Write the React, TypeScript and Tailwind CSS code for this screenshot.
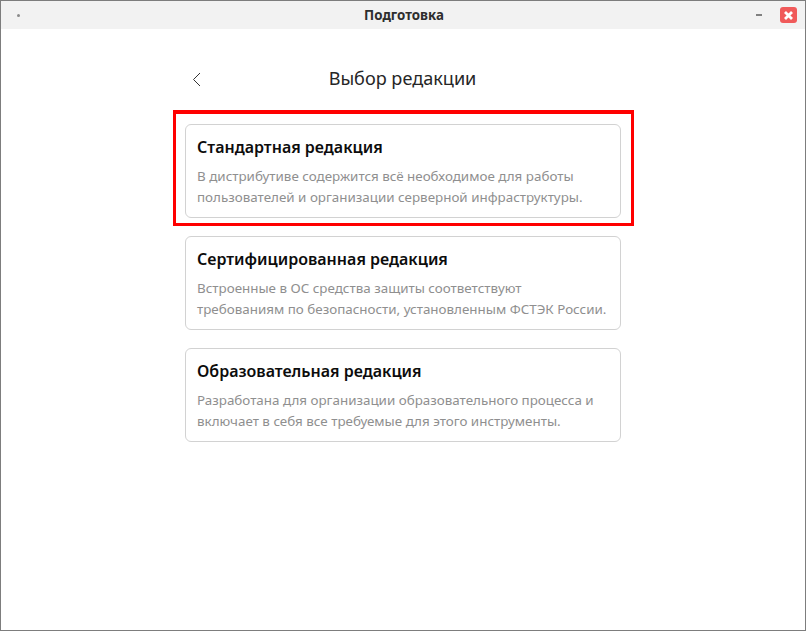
const editions = [
  {
    title: "Стандартная редакция",
    lines: ["В дистрибутиве содержится всё необходимое для работы", "пользователей и организации серверной инфраструктуры."],
  },
  {
    title: "Сертифицированная редакция",
    lines: ["Встроенные в ОС средства защиты соответствуют", "требованиям по безопасности, установленным ФСТЭК России."],
  },
  {
    title: "Образовательная редакция",
    lines: ["Разработана для организации образовательного процесса и", "включает в себя все требуемые для этого инструменты."],
  },
];

function EditionCard({ title, lines, selected }: { title: string; lines: string[]; selected?: boolean }) {
  return (
    <div className="relative h-[94px] w-[436px] rounded-[6px] border border-[#d2d2d2] bg-white pl-[11px] pt-[11px]">
      <div className="text-[16px] leading-[22px] font-semibold text-[#0c0c0c]">{title}</div>
      <div className="mt-[8px] text-[13.4px] leading-[20.5px] whitespace-nowrap text-[#8f8f8f]">
        {lines.map((line) => (
          <div key={line}>{line}</div>
        ))}
      </div>
      {selected && (
        <div className="absolute -top-[15px] -left-[13px] h-[116px] w-[461px] border-[3px] border-t-4 border-[#ff0000]" />
      )}
    </div>
  );
}

export default function App() {
  return (
    <div className="flex h-[631px] w-[806px] flex-col overflow-hidden border border-[#7d7d7d] bg-white font-['Noto_Sans','Open_Sans',sans-serif]">
      <div className="flex h-[28px] items-center bg-[#f2f2f2] pr-[8px] pl-[16px]">
        <div className="h-[3px] w-[3px] rounded-full bg-[#8a8a8a]" />
        <div className="flex-1 pt-[2px] pl-[32px] text-center text-[13.33px] font-bold text-[#2e2e2e]">Подготовка</div>
        <div className="mr-[18px] h-[2px] w-[6px] bg-[#808080]" />
        <div className="flex h-[16px] w-[17px] items-center justify-center rounded-[3px] bg-[#f05a5a]">
          <svg width="11" height="11" viewBox="0 0 11 11">
            <path d="M2 2l7 7M9 2l-7 7" stroke="#fff" strokeWidth="2.8" fill="none" />
          </svg>
        </div>
      </div>
      <div className="flex flex-1 flex-col items-center">
        <div className="mt-[36px] flex h-[28px] w-[436px] items-center">
          <svg className="ml-[7px]" width="9" height="15" viewBox="0 0 9 15">
            <path d="M8 1L1.5 7.5 8 14" stroke="#333" strokeWidth="1" fill="none" />
          </svg>
          <div className="flex-1 pr-[17px] pb-[1px] text-center text-[18.1px] text-[#262626]">Выбор редакции</div>
        </div>
        <div className="mt-[31px] flex flex-col gap-[18px]">
          {editions.map((edition, i) => (
            <EditionCard key={edition.title} title={edition.title} lines={edition.lines} selected={i === 0} />
          ))}
        </div>
      </div>
    </div>
  );
}
